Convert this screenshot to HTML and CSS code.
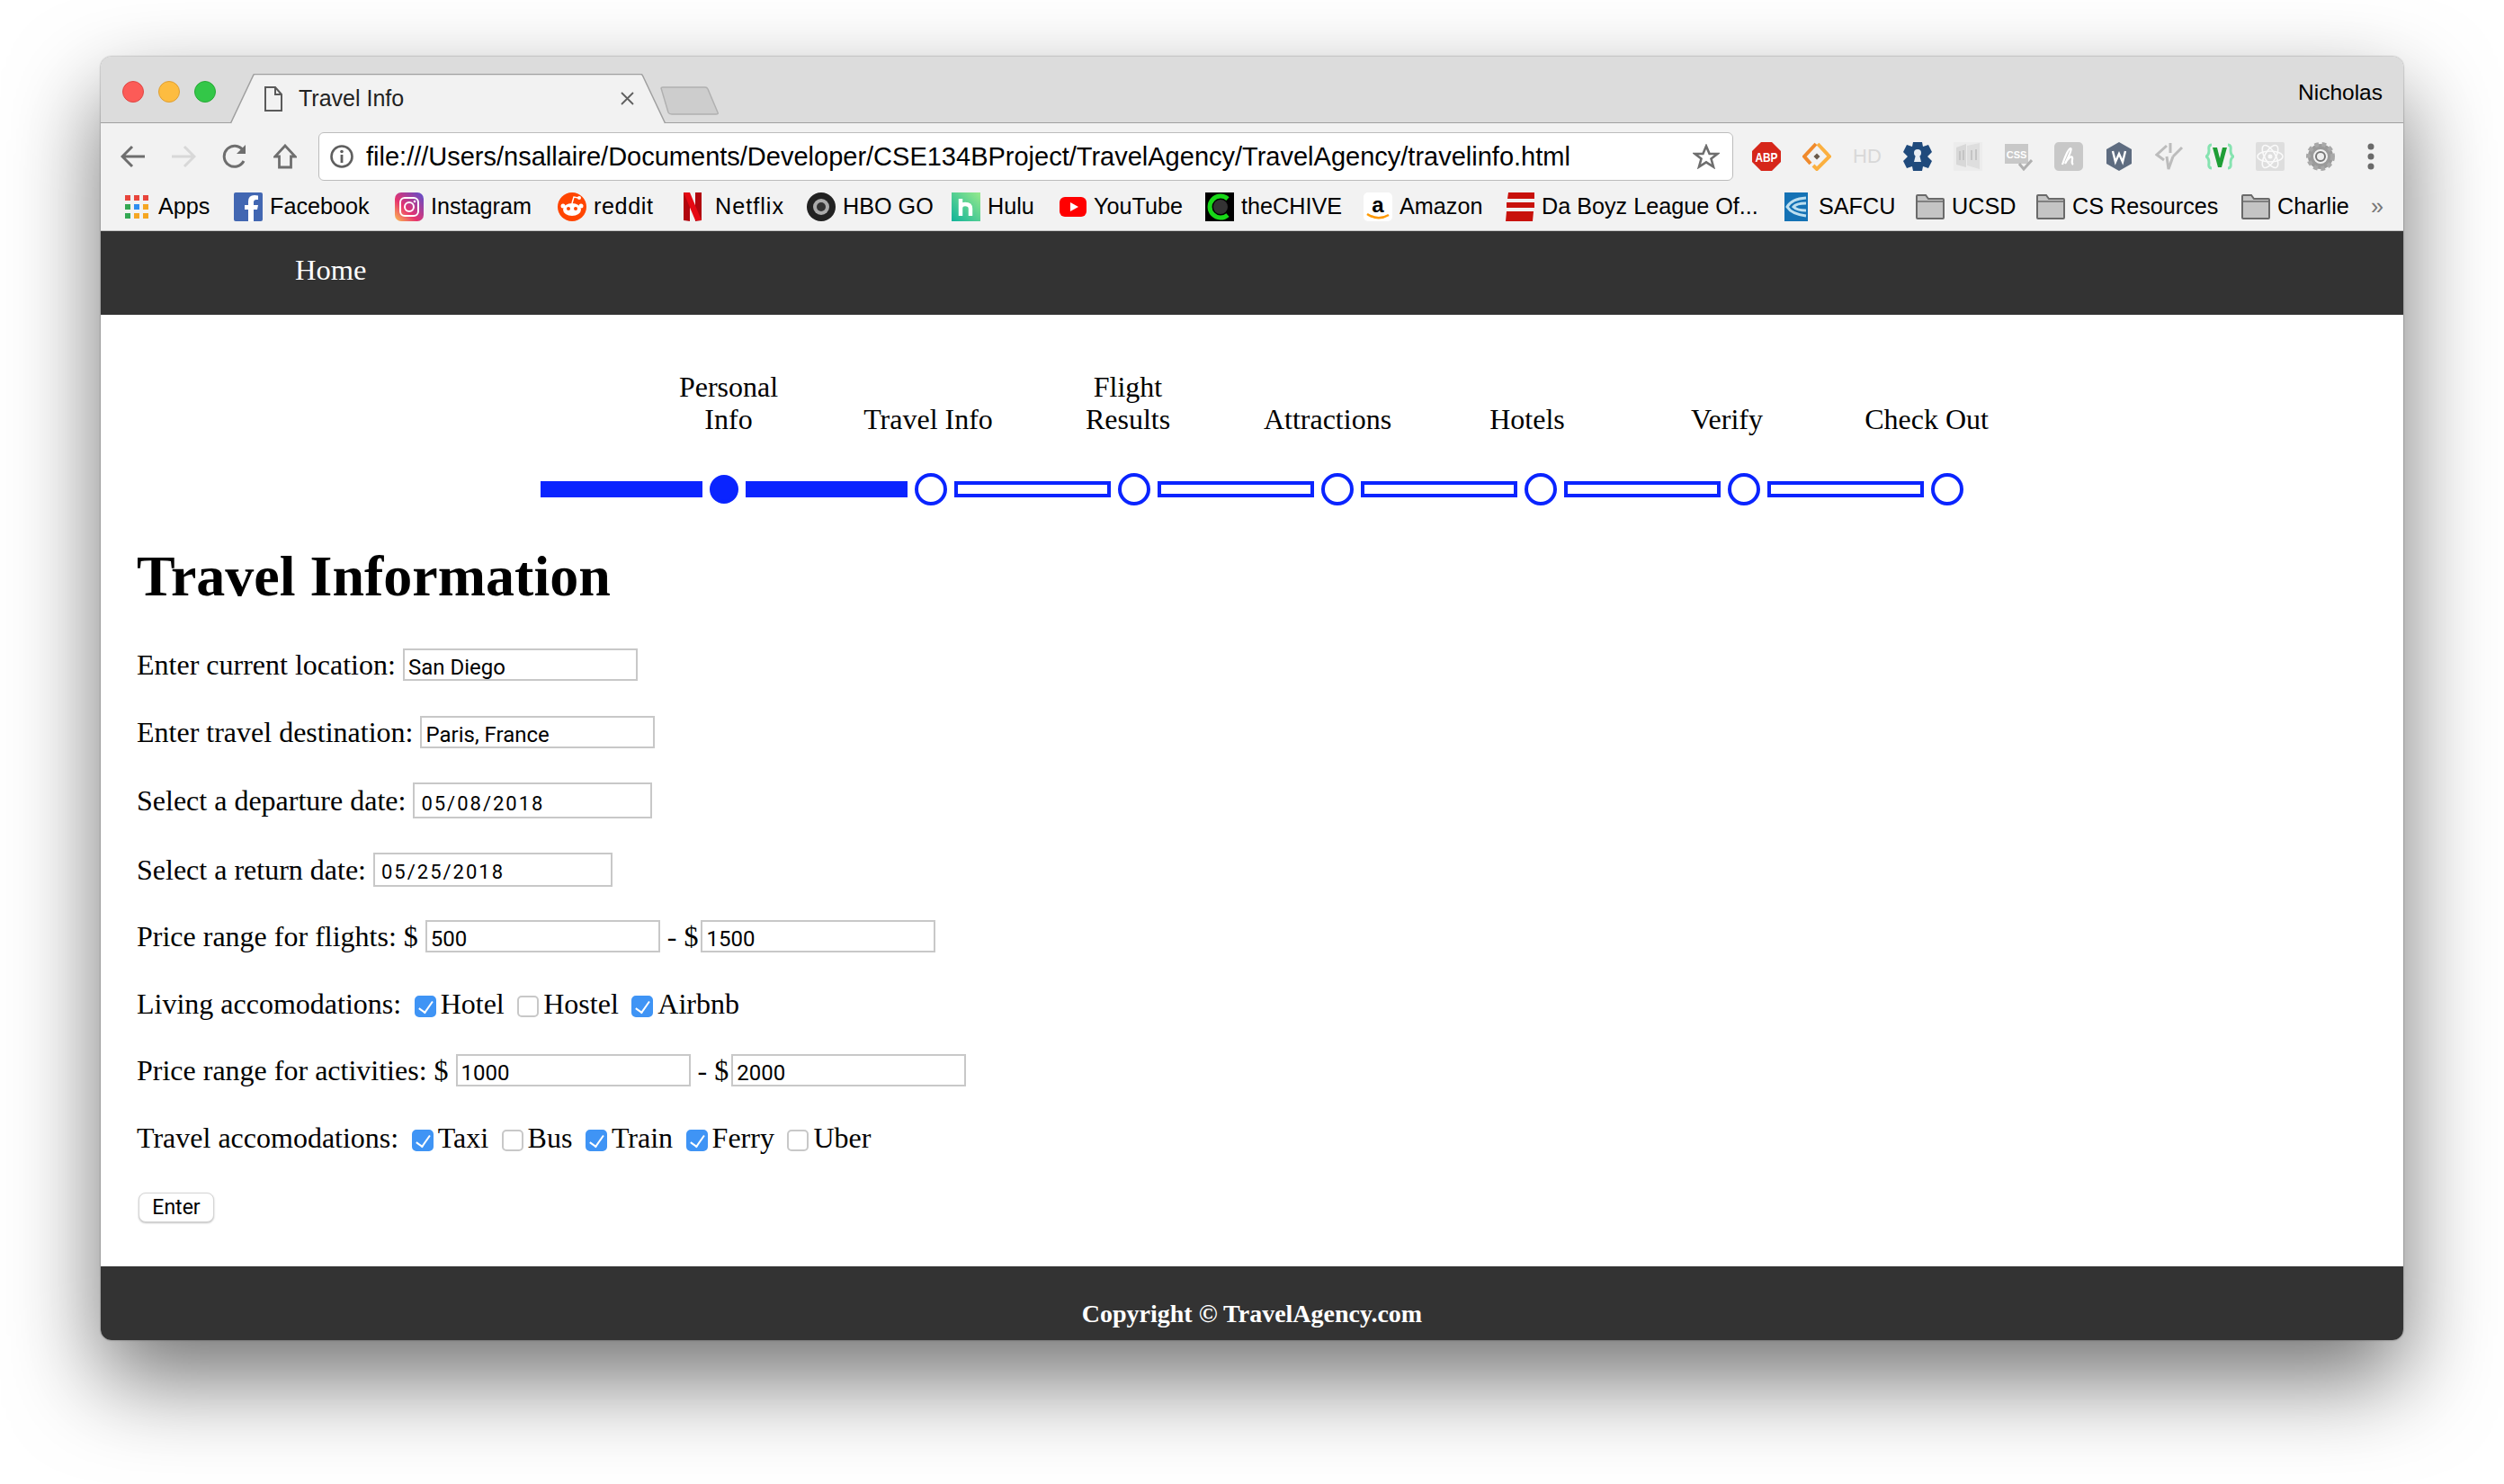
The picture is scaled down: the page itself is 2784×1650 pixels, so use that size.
FILE: index.html
```html
<!DOCTYPE html>
<html lang="en">
<head>
    <meta charset="UTF-8">
    <title>Travel Info</title>
    <link rel="stylesheet" href="styles.css">
</head>
<body>
<div class="window">
    <div class="tabstrip">
        <div class="lights"><span class="light red"></span><span class="light yellow"></span><span class="light green"></span></div>
        <div class="tab">
            <svg class="tab-shape" width="484" height="56" viewBox="0 0 484 56"><path d="M0.5 55 L26 1 Q26.5 0.5 28 0.5 L456 0.5 Q458 0.5 458.5 2 L483.5 55" fill="#f2f2f2" stroke="#a0a0a0" stroke-width="1.5"/></svg>
            <svg class="tab-doc" width="20" height="28" viewBox="0 0 20 28"><path d="M1 1H12L19 9V27H1Z M12 1V9H19" fill="none" stroke="#5a5a5a" stroke-width="2"/></svg>
            <span class="tab-title">Travel Info</span>
            <svg class="tab-close" width="15" height="15" viewBox="0 0 15 15"><path d="M1 1L14 14M14 1L1 14" stroke="#5f5f5f" stroke-width="1.800"/></svg>
        </div>
        <svg class="newtab" width="66" height="32" viewBox="0 0 66 32"><path d="M1 2Q1 1 3 1H50Q52 1 53 3L64 29Q65 31 62 31H13Q10 31 9 29Z" fill="#cdcdcd" stroke="#b0b0b0" stroke-width="1.500"/></svg>
        <span class="profile">Nicholas</span>
    </div>

    <div class="toolbar">
        <svg class="navbtn" width="28" height="26" viewBox="0 0 28 26"><path d="M27 13H3M13 2L2 13L13 24" fill="none" stroke="#6e6e6e" stroke-width="3"/></svg>
        <svg class="navbtn" width="28" height="26" viewBox="0 0 28 26"><path d="M1 13H25M15 2L26 13L15 24" fill="none" stroke="#d8d8d8" stroke-width="3"/></svg>
        <svg class="navbtn" width="30" height="28" viewBox="0 0 30 28"><path d="M25 19A11.500 11.500 0 1 1 24 7" fill="none" stroke="#6e6e6e" stroke-width="3"/><path d="M27 1V11H17Z" fill="#6e6e6e"/></svg>
        <svg class="navbtn home" width="26" height="28" viewBox="0 0 28 28" preserveAspectRatio="none"><path d="M14 2L26 14H21V26H7V14H2Z" fill="none" stroke="#6e6e6e" stroke-width="3"/></svg>
        <div class="omnibox">
            <svg class="info" width="26" height="26" viewBox="0 0 26 26"><circle cx="13" cy="13" r="11.500" fill="none" stroke="#5f5f5f" stroke-width="2.600"/><path d="M13 11V20" stroke="#5f5f5f" stroke-width="2.800"/><circle cx="13" cy="7.500" r="1.800" fill="#5f5f5f"/></svg>
            <span class="url">file:///Users/nsallaire/Documents/Developer/CSE134BProject/TravelAgency/TravelAgency/travelinfo.html</span>
            <svg class="star" width="30" height="28" viewBox="0 0 30 28"><path d="M15 2.500L18.600 11H27.500L20.500 16.600L23 25.500L15 20.400L7 25.500L9.500 16.600L2.500 11H11.400Z" fill="none" stroke="#6e6e6e" stroke-width="2.600"/></svg>
        </div>
        <div class="extensions">
            <svg width="32" height="32" viewBox="0 0 32 32"><path d="M10 0H22L32 10V22L22 32H10L0 22V10Z" fill="#d6261a"/><text x="16" y="21.500" class="abp" textLength="25" lengthAdjust="spacingAndGlyphs">ABP</text></svg>
            <svg width="32" height="32" viewBox="0 0 32 32"><path d="M15 2L2 16L9 24" fill="none" stroke="#f08a2c" stroke-width="4"/><path d="M17 2L30 16L16 30L12 26" fill="none" stroke="#fbb040" stroke-width="4"/><rect x="13.500" y="13.500" width="5" height="5" fill="#6a5a4a" transform="rotate(45 16 16)"/></svg>
            <svg width="32" height="32" viewBox="0 0 32 32"><text x="16" y="23" class="hd">HD</text></svg>
            <svg width="32" height="32" viewBox="0 0 32 32"><path d="M11 0H21L22 5L28 3L32 11L27 16L32 21L28 29L22 27L21 32H11L10 27L4 29L0 21L5 16L0 11L4 3L10 5Z" fill="#1f4a7c"/><circle cx="16" cy="12" r="4" fill="#e8edf3"/><path d="M14 14H18L20 22H12Z" fill="#e8edf3"/></svg>
            <svg width="32" height="32" viewBox="0 0 32 32"><rect width="32" height="32" fill="#ececec"/><path d="M3 6L14 2V28L3 25Z" fill="#d8d8d8"/><path d="M15 4L29 1V30L15 26Z" fill="#dedede"/><path d="M7 10V20M11 9V20M20 9V20M25 8V20" stroke="#c4c4c4" stroke-width="2"/></svg>
            <svg width="32" height="32" viewBox="0 0 32 32"><rect x="1" y="2" width="26" height="22" fill="#c8c8c8"/><text x="14" y="18" class="css">CSS</text><path d="M17 24L22 30L31 20" fill="none" stroke="#b0b0b0" stroke-width="3"/></svg>
            <svg width="32" height="32" viewBox="0 0 32 32"><rect width="32" height="32" rx="5" fill="#c8c8c8"/><path d="M9 25C12 16 16 7 18 7C20 7 17 14 12 24C15 18 19 15 20 17C21 19 18 23 21 25" fill="none" stroke="#fff" stroke-width="2.200"/></svg>
            <svg width="32" height="32" viewBox="0 0 32 32"><path d="M16 0L30 8V24L16 32L2 24V8Z" fill="#5e6c80"/><path d="M9 10L12 22L16 13L20 22L23 10" fill="none" stroke="#fff" stroke-width="2.400"/></svg>
            <svg width="32" height="32" viewBox="0 0 32 32"><path d="M13 4L2 14L10 20M17 1V12M30 6L20 16M13 16L15 30L20 16" fill="none" stroke="#bcbcbc" stroke-width="3"/></svg>
            <svg width="32" height="32" viewBox="0 0 32 32"><path d="M7 3Q3 3 4 9Q4 14 1 16Q4 18 4 23Q3 29 7 29M25 3Q29 3 28 9Q28 14 31 16Q28 18 28 23Q29 29 25 29" fill="none" stroke="#86e3b0" stroke-width="3"/><path d="M8 6H13L16 18L19 6H24L18 28H14Z" fill="#1f9e36"/></svg>
            <svg width="32" height="32" viewBox="0 0 32 32"><rect width="32" height="32" rx="2" fill="#dedede"/><g fill="none" stroke="#fafafa" stroke-width="1.600"><ellipse cx="16" cy="16" rx="14" ry="6"/><ellipse cx="16" cy="16" rx="14" ry="6" transform="rotate(60 16 16)"/><ellipse cx="16" cy="16" rx="14" ry="6" transform="rotate(120 16 16)"/></g><circle cx="16" cy="16" r="2.500" fill="#fafafa"/></svg>
            <svg width="32" height="32" viewBox="0 0 32 32"><circle cx="16" cy="16" r="11" fill="none" stroke="#9a9a9a" stroke-width="6"/><circle cx="16" cy="16" r="13.500" fill="none" stroke="#a8a8a8" stroke-width="5" stroke-dasharray="4.500 3.600"/><circle cx="16" cy="16" r="5" fill="#eee" stroke="#777" stroke-width="2"/></svg>
            <svg class="menu" width="8" height="30" viewBox="0 0 8 30"><circle cx="4" cy="4" r="3.500" fill="#6a6a6a"/><circle cx="4" cy="15" r="3.500" fill="#6a6a6a"/><circle cx="4" cy="26" r="3.500" fill="#6a6a6a"/></svg>
        </div>
    </div>

    <div class="bookmarks">
        <a class="bm bm-apps"><svg width="26" height="26" viewBox="0 0 26 26"><rect width="6" height="6" fill="#e8453c"/><rect x="10" width="6" height="6" fill="#e8453c"/><rect x="20" width="6" height="6" fill="#e8453c"/><rect y="10" width="6" height="6" fill="#34a853"/><rect x="10" y="10" width="6" height="6" fill="#2f8ef0"/><rect x="20" y="10" width="6" height="6" fill="#f5a623"/><rect y="20" width="6" height="6" fill="#34a853"/><rect x="10" y="20" width="6" height="6" fill="#f5a623"/><rect x="20" y="20" width="6" height="6" fill="#f5a623"/></svg>Apps</a>
        <a class="bm"><svg width="32" height="32" viewBox="0 0 32 32"><rect width="32" height="32" rx="2" fill="#4267b2"/><path d="M22 32V19H26L27 14H22V11Q22 8 25 8H27V3.500Q25 3 23 3Q16 3 16 10V14H12V19H16V32Z" fill="#fff"/></svg>Facebook</a>
        <a class="bm"><svg width="32" height="32" viewBox="0 0 32 32"><defs><linearGradient id="ig" x1="0" y1="1" x2="1" y2="0"><stop offset="0" stop-color="#fdc04f"/><stop offset=".4" stop-color="#e6336f"/><stop offset="1" stop-color="#5a4fcf"/></linearGradient></defs><rect width="32" height="32" rx="7" fill="url(#ig)"/><rect x="6" y="6" width="20" height="20" rx="5" fill="none" stroke="#fff" stroke-width="2"/><circle cx="16" cy="16" r="5" fill="none" stroke="#fff" stroke-width="2"/><circle cx="22" cy="10" r="1.300" fill="#fff"/></svg>Instagram</a>
        <a class="bm bm-reddit"><svg width="32" height="32" viewBox="0 0 32 32"><circle cx="16" cy="16" r="16" fill="#ff4500"/><ellipse cx="16" cy="19" rx="10" ry="7" fill="#fff"/><circle cx="6" cy="15" r="2.500" fill="#fff"/><circle cx="26" cy="15" r="2.500" fill="#fff"/><circle cx="12" cy="18" r="2" fill="#ff4500"/><circle cx="20" cy="18" r="2" fill="#ff4500"/><path d="M16 12L18 5L23 6" fill="none" stroke="#fff" stroke-width="1.500"/><circle cx="24" cy="6" r="2" fill="#fff"/></svg>reddit</a>
        <a class="bm bm-netflix"><svg width="20" height="32" viewBox="0 0 20 32"><path d="M0 0H7V32L0 31Z" fill="#b1060f"/><path d="M13 0H20V31L13 32Z" fill="#b1060f"/><path d="M0 0H7L20 31L13 31Z" fill="#e50914"/></svg>Netflix</a>
        <a class="bm"><svg width="32" height="32" viewBox="0 0 32 32"><circle cx="16" cy="16" r="16" fill="#222"/><circle cx="16" cy="16" r="9" fill="#aaa"/><circle cx="16" cy="16" r="5" fill="#333"/></svg>HBO GO</a>
        <a class="bm"><svg width="32" height="32" viewBox="0 0 32 32"><defs><linearGradient id="hu" x1="0" y1="1" x2="1" y2="0"><stop offset="0" stop-color="#10b39a"/><stop offset="1" stop-color="#97ea8c"/></linearGradient></defs><rect width="32" height="32" fill="url(#hu)"/><path d="M10 7V26M10 17Q10 13 15 13Q21 13 21 18V26" fill="none" stroke="#fff" stroke-width="4.500"/></svg>Hulu</a>
        <a class="bm"><svg width="30" height="32" viewBox="0 0 30 32"><rect y="5" width="30" height="22" rx="6" fill="#f00"/><path d="M12 11L21 16L12 21Z" fill="#fff"/></svg>YouTube</a>
        <a class="bm"><svg width="32" height="32" viewBox="0 0 32 32"><rect width="32" height="32" fill="#000"/><circle cx="17" cy="16" r="8" fill="#333"/><path d="M25 7A12 12 0 1 0 25 25" fill="none" stroke="#18d818" stroke-width="5"/></svg>theCHIVE</a>
        <a class="bm"><svg width="32" height="32" viewBox="0 0 32 32"><rect width="32" height="32" rx="5" fill="#fff"/><text x="16" y="22" class="amz">a</text><path d="M4 24Q16 32 28 25" fill="none" stroke="#f90" stroke-width="2.500"/></svg>Amazon</a>
        <a class="bm"><svg width="32" height="32" viewBox="0 0 32 32"><path d="M3 0H32V7H2Z M1 11H32V17H1Z M1 21H31L30 32H0Z" fill="#c8120c"/></svg>Da Boyz League Of...</a>
        <a class="bm bm-safcu"><svg width="26" height="32" viewBox="0 0 26 32"><rect width="26" height="32" fill="#1472b5"/><path d="M24 6Q8 7 3 16Q8 24 24 26M24 12Q13 12 10 16Q14 20 24 20" fill="none" stroke="#bcdff0" stroke-width="3"/></svg>SAFCU</a>
        <a class="bm"><svg width="32" height="28" viewBox="0 0 32 28"><path d="M1 5V2Q1 1 2 1H11L14 5H30Q31 5 31 6V26Q31 27 30 27H2Q1 27 1 26Z" fill="#c4c4c4" stroke="#6a6a6a" stroke-width="2"/><path d="M1 8H31" stroke="#6a6a6a" stroke-width="1.500"/></svg>UCSD</a>
        <a class="bm"><svg width="32" height="28" viewBox="0 0 32 28"><path d="M1 5V2Q1 1 2 1H11L14 5H30Q31 5 31 6V26Q31 27 30 27H2Q1 27 1 26Z" fill="#c4c4c4" stroke="#6a6a6a" stroke-width="2"/><path d="M1 8H31" stroke="#6a6a6a" stroke-width="1.500"/></svg>CS Resources</a>
        <a class="bm"><svg width="32" height="28" viewBox="0 0 32 28"><path d="M1 5V2Q1 1 2 1H11L14 5H30Q31 5 31 6V26Q31 27 30 27H2Q1 27 1 26Z" fill="#c4c4c4" stroke="#6a6a6a" stroke-width="2"/><path d="M1 8H31" stroke="#6a6a6a" stroke-width="1.500"/></svg>Charlie</a>
        <span class="more">»</span>
    </div>

    <nav class="site-nav"><a>Home</a></nav>

    <main class="content">
        <div class="step-labels">
            <div class="step-label">Personal Info</div>
            <div class="step-label">Travel Info</div>
            <div class="step-label">Flight Results</div>
            <div class="step-label">Attractions</div>
            <div class="step-label">Hotels</div>
            <div class="step-label">Verify</div>
            <div class="step-label">Check Out</div>
        </div>
        <div class="progress">
            <span class="bar filled"></span><span class="dot filled"></span>
            <span class="bar filled"></span><span class="dot"></span>
            <span class="bar"></span><span class="dot"></span>
            <span class="bar"></span><span class="dot"></span>
            <span class="bar"></span><span class="dot"></span>
            <span class="bar"></span><span class="dot"></span>
            <span class="bar"></span><span class="dot"></span>
        </div>

        <h1>Travel Information</h1>

        <form>
            <p>Enter current location: <input type="text" value="San Diego"></p>
            <p>Enter travel destination: <input type="text" value="Paris, France"></p>
            <p>Select a departure date: <input class="date" type="text" value="05/08/2018"></p>
            <p class="return">Select a return date: <input class="date" type="text" value="05/25/2018"></p>
            <p>Price range for flights: $ <input type="text" value="500"> - $<input class="tight" type="text" value="1500"></p>
            <p>Living accomodations: <input type="checkbox" checked>Hotel <input type="checkbox">Hostel <input type="checkbox" checked>Airbnb</p>
            <p>Price range for activities: $ <input type="text" value="1000"> - $<input class="tight" type="text" value="2000"></p>
            <p>Travel accomodations: <input type="checkbox" checked>Taxi <input type="checkbox">Bus <input type="checkbox" checked>Train <input type="checkbox" checked>Ferry <input type="checkbox">Uber</p>
            <button type="button">Enter</button>
        </form>
    </main>

    <footer class="site-footer">Copyright © TravelAgency.com</footer>
</div>
</body>
</html>
```

FILE: styles.css
```css
* {
    box-sizing: border-box;
}

html, body {
    margin: 0;
    height: 1650px;
    overflow: hidden;
    background-color: #fff;
}

body {
    padding-top: 63px;
}

.window {
    width: 2560px;
    margin: 0 auto;
    border-radius: 12px;
    overflow: hidden;
    box-shadow: 0 44px 100px rgba(0,0,0,0.55), 0 0 2px rgba(0,0,0,0.5);
    font-family: "Liberation Serif", serif;
    color: #000;
    background-color: #fff;
}

/* browser chrome */
.tabstrip {
    display: flex;
    align-items: flex-end;
    height: 74px;
    background-color: #dcdcdc;
    border-bottom: 1.5px solid #a0a0a0;
    font-family: "Liberation Sans", sans-serif;
}

.lights {
    display: flex;
    gap: 16px;
    align-self: flex-start;
    margin: 27px 0 0 24px;
}

.light {
    width: 24px;
    height: 24px;
    border-radius: 50%;
}

.light.red { background-color: #fc5b57; border: 1px solid #df4744; }
.light.yellow { background-color: #fdbc40; border: 1px solid #de9f34; }
.light.green { background-color: #33c748; border: 1px solid #27aa35; }

.tab {
    position: relative;
    display: flex;
    align-items: center;
    width: 484px;
    height: 56px;
    margin: 0 0 -1.5px 16px;
    padding-left: 38px;
    flex: none;
}

.tab-shape {
    position: absolute;
    left: 0;
    top: 0;
}

.tab-doc, .tab-title, .tab-close {
    position: relative;
}

.tab-title {
    margin-left: 18px;
    font-size: 25px;
    color: #222;
}

.tab-close {
    margin-left: 241px;
}

.newtab {
    margin: 0 0 8px -6px;
}

.profile {
    margin-left: auto;
    align-self: center;
    padding: 7px 23px 0 0;
    font-size: 24.5px;
}

.toolbar {
    display: flex;
    align-items: center;
    height: 68px;
    padding: 5px 0 0 22px;
    background-color: #f2f2f2;
}

.navbtn {
    margin-right: 28px;
    flex: none;
}

.navbtn.home {
    margin-right: 30px;
}

.omnibox {
    display: flex;
    align-items: center;
    flex: none;
    width: 1573px;
    height: 54px;
    margin-left: -6px;
    padding: 0 14px 0 12px;
    background-color: #fff;
    border: 1.5px solid #bcbcbc;
    border-radius: 6px;
}

.url {
    margin-left: 14px;
    padding-top: 2px;
    font-family: "Liberation Sans", sans-serif;
    font-size: 29px;
    white-space: nowrap;
}

.star {
    margin-left: auto;
}

.extensions {
    display: flex;
    align-items: center;
    gap: 24px;
    margin-left: 21px;
}

.menu {
    margin-left: 12px;
}

.abp {
    font: bold 14px "Liberation Sans", sans-serif;
    fill: #fff;
    text-anchor: middle;
}

.hd {
    font: 22px "Liberation Sans", sans-serif;
    fill: #d8d8d8;
    text-anchor: middle;
}

.css {
    font: bold 11px "Liberation Sans", sans-serif;
    fill: #fff;
    text-anchor: middle;
}

.amz {
    font: bold 24px "Liberation Sans", sans-serif;
    fill: #000;
    text-anchor: middle;
}

.bookmarks {
    display: grid;
    grid-template-columns: 121px 179px 181px 140px 137px 161px 120px 162px 176px 158px 310px 146px 134px 228px 144px auto;
    align-items: center;
    height: 52px;
    padding: 0 0 2px 27px;
    background-color: #f2f2f2;
    border-bottom: 1.5px solid #c4c4c4;
    font-family: "Liberation Sans", sans-serif;
    font-size: 25.2px;
    white-space: nowrap;
}

.bm {
    display: flex;
    align-items: center;
    gap: 8px;
}

.bm-apps { gap: 11px; }
.bm-safcu { gap: 12px; }
.bm-netflix { gap: 15px; letter-spacing: 1px; }
.bm-reddit { letter-spacing: 0.6px; }

.more {
    color: #777;
}

/* site */
.site-nav {
    height: 93px;
    padding: 0 0 6px 216px;
    display: flex;
    align-items: center;
    background-color: #333;
    color: #fff;
    font-size: 32.5px;
}

.content {
    height: 1058px;
    padding: 62px 40px 0;
    font-size: 32px;
}

.step-labels {
    display: flex;
    margin-left: 547px;
    align-items: flex-end;
}

.step-label {
    width: 222px;
    padding: 0 36px;
    text-align: center;
    line-height: 36px;
}

.progress {
    display: flex;
    justify-content: center;
    align-items: center;
    gap: 8px;
    margin: 42px -40px 0;
}

.bar {
    width: 174px;
    height: 18px;
    border: 4px solid #0a24ff;
}

.bar.filled {
    width: 180px;
    background-color: #0a24ff;
}

.dot {
    width: 36px;
    height: 36px;
    border-radius: 50%;
    border: 4px solid #0a24ff;
}

.dot.filled {
    width: 32px;
    height: 32px;
    background-color: #0a24ff;
}

h1 {
    margin: 42px 0 0;
    font-size: 64px;
    line-height: 74px;
}

form {
    margin-top: 43px;
}

p {
    margin: 0 0 37.5px;
}

input[type="text"] {
    width: 261px;
    height: 36px;
    padding: 6px 4px 0;
    border: 2px solid #c8c8c8;
    font-family: Roboto, sans-serif;
    font-size: 24px;
    color: #000;
    background-color: #fff;
    outline: none;
}

input.date {
    width: 266px;
    height: 40px;
    padding-left: 7px;
    font-size: 22px;
    letter-spacing: 2px;
}

.return input.date {
    height: 38px;
}

input.tight {
    margin-left: 3px;
}

input[type="checkbox"] {
    appearance: none;
    position: relative;
    width: 24px;
    height: 24px;
    margin: 0 5px 0 6.5px;
    border: 2px solid #c8c8c8;
    border-radius: 5px;
    background-color: #fff;
    vertical-align: -4px;
}

input[type="checkbox"]:checked {
    border-color: #3f94f5;
    background-color: #3f94f5;
}

input[type="checkbox"]:checked::after {
    content: "";
    position: absolute;
    left: 6px;
    top: 1px;
    width: 7px;
    height: 14px;
    border: solid #fff;
    border-width: 0 2px 2px 0;
    transform: rotate(35deg);
}

button {
    width: 84px;
    height: 33px;
    padding: 0;
    margin-left: 2px;
    border: 1px solid #d4d4d4;
    border-radius: 8px;
    background-color: #fff;
    box-shadow: 0 1px 2px rgba(0,0,0,0.25);
    font-family: Roboto, sans-serif;
    font-size: 23px;
    color: #000;
}

.site-footer {
    height: 82px;
    display: flex;
    align-items: center;
    justify-content: center;
    padding-top: 24px;
    background-color: #333;
    color: #fff;
    font-size: 28px;
    font-weight: bold;
}
```
